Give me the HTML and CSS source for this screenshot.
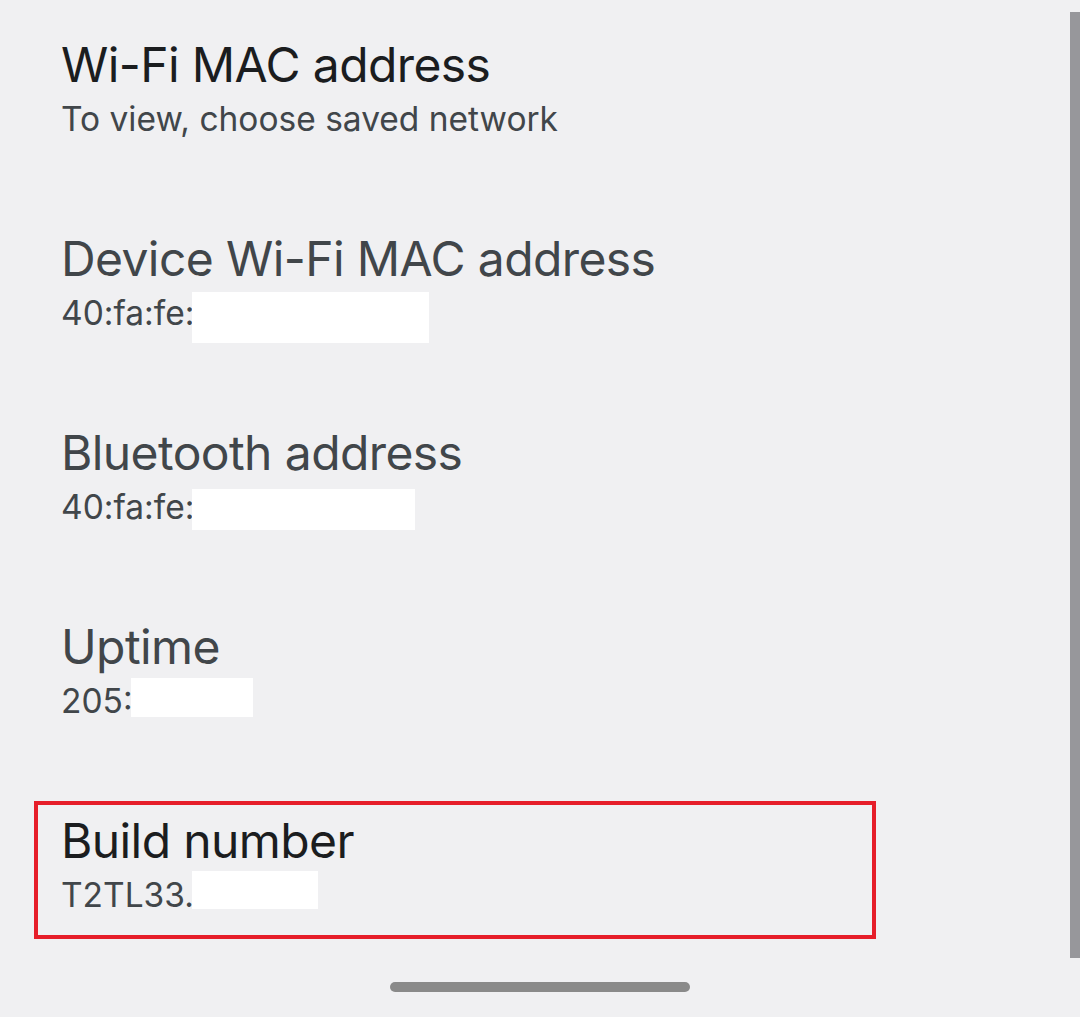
FILE: index.html
```html
<!DOCTYPE html>
<html lang="en">
<head>
  <meta charset="UTF-8">
  <title>About phone</title>
  <link rel="stylesheet" href="styles.css">
</head>
<body>
  <div id="list">
    <div class="item">
      <div class="title">Wi-Fi MAC address</div>
      <div class="summary">To view, choose saved network</div>
    </div>
    <div class="item dim">
      <div class="title">Device Wi-Fi MAC address</div>
      <div class="summary">40:fa:fe:<span class="mask mask-wifi"></span></div>
    </div>
    <div class="item dim">
      <div class="title">Bluetooth address</div>
      <div class="summary">40:fa:fe:<span class="mask mask-bt"></span></div>
    </div>
    <div class="item dim">
      <div class="title">Uptime</div>
      <div class="summary">205:<span class="mask mask-up"></span></div>
    </div>
    <div class="item marked">
      <div class="title">Build number</div>
      <div class="summary">T2TL33.<span class="mask mask-build"></span></div>
    </div>
  </div>
  <div id="scrollbar"></div>
  <div id="handle"></div>
</body>
</html>
```

FILE: styles.css
```css
* { box-sizing: border-box; margin: 0; padding: 0; }
body {
  width: 1080px;
  height: 1017px;
  overflow: hidden;
  position: relative;
  background: #f0f0f2;
  font-family: "Inter", "Open Sans", sans-serif;
  color: #1b1d1f;
}
#list {
  display: flex;
  flex-direction: column;
  gap: 56px;
  padding-top: 25px;
  padding-left: 34px;
}
.item {
  width: 842px;
  height: 138px;
  border: 4px solid transparent;
  padding: 7.5px 0 0 23px;
}
.item.marked { border-color: #e61e2a; }
.title { font-size: 48px; line-height: 56px; letter-spacing: -0.6px; white-space: nowrap; }
.summary {
  font-size: 33.5px;
  line-height: 52.5px;
  color: #41464a;
  display: flex;
  align-items: flex-start;
  white-space: nowrap;
}
.dim .title { color: #41464a; }
.mask { display: inline-block; background: #fff; margin-left: -2px; }
.mask-wifi { width: 237px; height: 51px; margin-top: 5.5px; }
.mask-bt { width: 223px; height: 41px; margin-top: 8.5px; }
.mask-up { width: 122px; height: 39px; margin-top: 3.5px; }
.mask-build { width: 126px; height: 38px; margin-top: 2.5px; }
#scrollbar {
  position: absolute;
  top: 12px; right: 0;
  width: 10px; height: 946px;
  background: #97979b;
}
#handle {
  position: absolute;
  left: 390px; top: 982px;
  width: 300px; height: 10px;
  border-radius: 5px;
  background: #8a8a8a;
}
```
